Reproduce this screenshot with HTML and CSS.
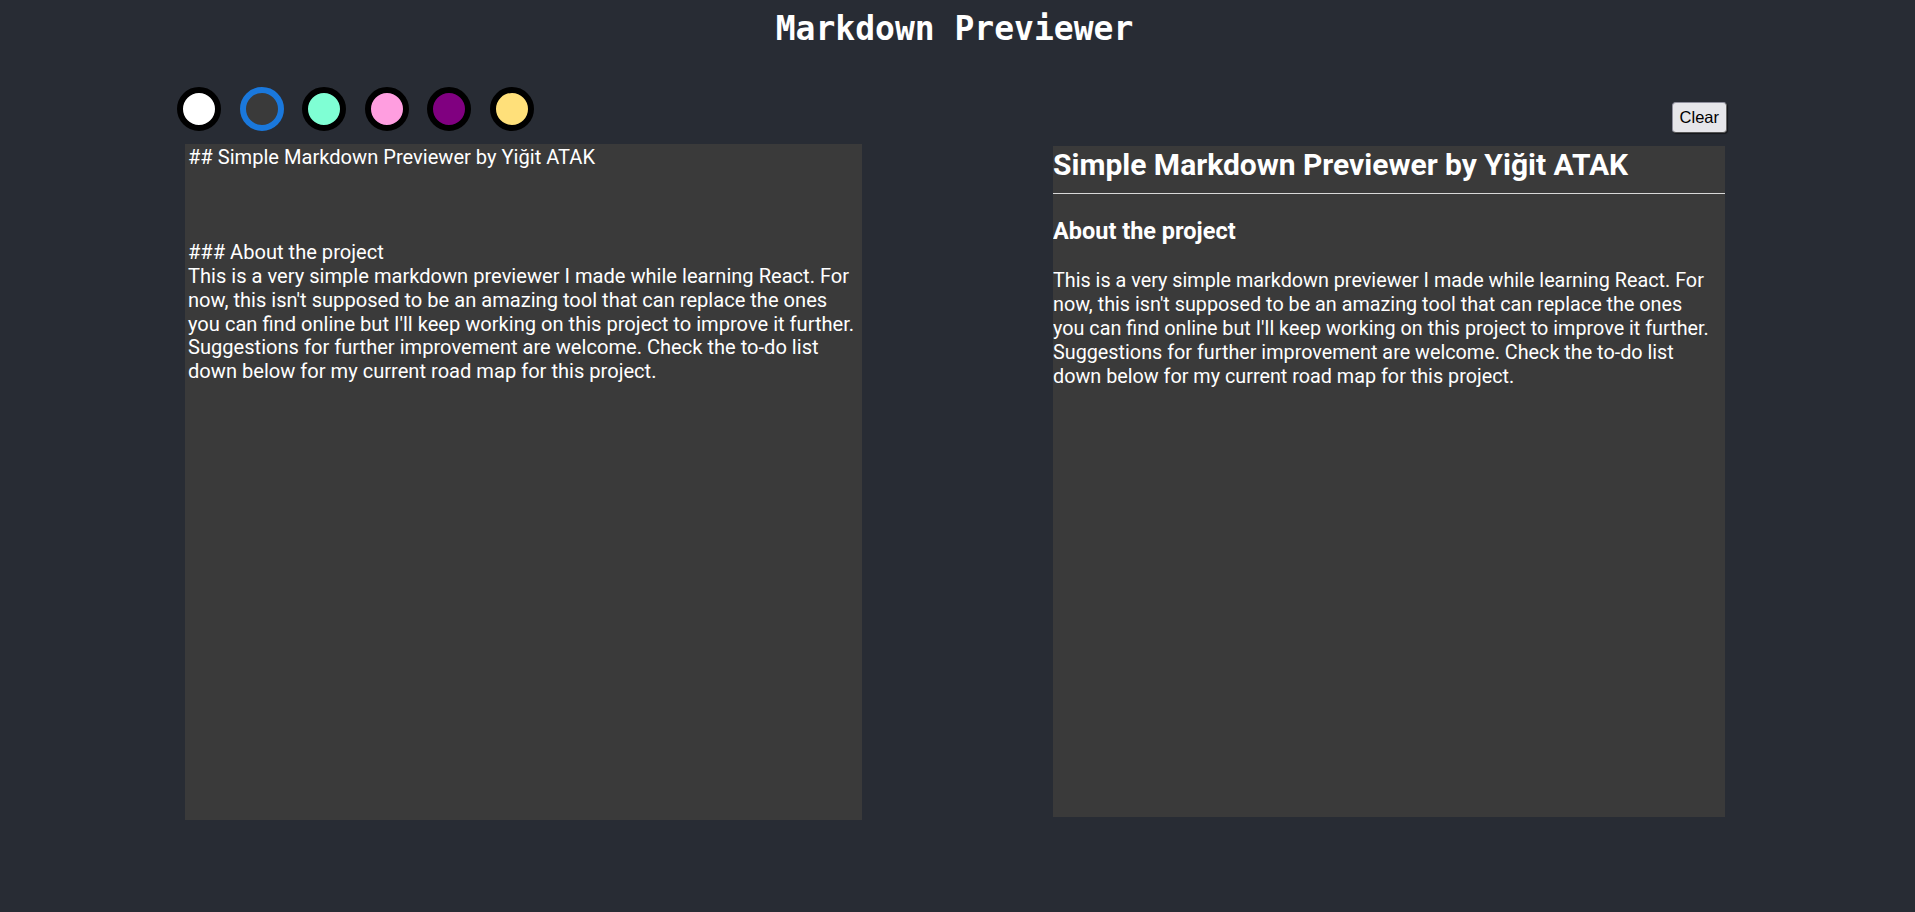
FILE: index.html
```html
<!DOCTYPE html>
<html lang="en">
<head>
<meta charset="utf-8">
<title>Markdown Previewer</title>
<link rel="stylesheet" href="styles.css">
</head>
<body>
<header class="header">
  <h1 class="title">Markdown Previewer</h1>
</header>
<main class="app">
  <div class="toolbar">
    <div class="themes">
      <span class="swatch swatch-white"></span>
      <span class="swatch swatch-dark active"></span>
      <span class="swatch swatch-aqua"></span>
      <span class="swatch swatch-pink"></span>
      <span class="swatch swatch-purple"></span>
      <span class="swatch swatch-yellow"></span>
    </div>
    <button class="clear-btn" type="button">Clear</button>
  </div>
  <div class="panes">
    <textarea class="editor" spellcheck="false">## Simple Markdown Previewer by Yiğit ATAK



### About the project
This is a very simple markdown previewer I made while learning React. For now, this isn't supposed to be an amazing tool that can replace the ones you can find online but I'll keep working on this project to improve it further. Suggestions for further improvement are welcome. Check the to-do list down below for my current road map for this project.</textarea>
    <div class="preview">
      <h2 class="pv-h2">Simple Markdown Previewer by Yiğit ATAK</h2>
      <h3 class="pv-h3">About the project</h3>
      <p class="pv-p">This is a very simple markdown previewer I made while learning React. For now, this isn't supposed to be an amazing tool that can replace the ones you can find online but I'll keep working on this project to improve it further. Suggestions for further improvement are welcome. Check the to-do list down below for my current road map for this project.</p>
    </div>
  </div>
</main>
</body>
</html>
```

FILE: styles.css
```css
html, body {
  margin: 0;
  padding: 0;
  background: #282c34;
  height: 100%;
}

body {
  font-family: Roboto, "Liberation Sans", sans-serif;
  color: #ffffff;
}

.header {
  display: flex;
  justify-content: center;
  padding-top: 8px;
  padding-right: 6px;
}

.title {
  margin: 0;
  font-family: "DejaVu Sans Mono", "Liberation Mono", monospace;
  font-weight: bold;
  font-size: 33px;
  line-height: 42px;
  color: #ffffff;
}

.app {
  width: 1550px;
  margin: 0 0 0 177px;
}

.toolbar {
  display: flex;
  justify-content: space-between;
  align-items: flex-end;
  margin-top: 37px;
}

.themes {
  display: flex;
  gap: 18.5px;
  padding-bottom: 2px;
}

.swatch {
  display: block;
  width: 44px;
  height: 44px;
  box-sizing: border-box;
  border: 6px solid #000000;
  border-radius: 50%;
}

.swatch-white { background: #ffffff; }
.swatch-dark { background: #3a3a3a; }
.swatch-dark.active { border-color: #1a78dc; }
.swatch-aqua { background: #7fffd4; }
.swatch-pink { background: #ff9ee0; }
.swatch-purple { background: #800080; }
.swatch-yellow { background: #ffe07a; }

.clear-btn {
  font-family: "Liberation Sans", Arial, sans-serif;
  font-size: 16.5px;
  color: #000000;
  background: #e6e6ea;
  border: 1px solid #8f8f9d;
  border-bottom-color: #555;
  border-right-color: #666;
  border-radius: 4px;
  padding: 4px 7px;
  height: 31px;
  box-shadow: 1px 1px 1px rgba(0,0,0,0.5);
}

.panes {
  display: flex;
  justify-content: space-between;
  align-items: flex-start;
  padding: 0 2px 0 8px;
  margin-top: 11px;
}

.editor {
  display: block;
  width: 677px;
  height: 676px;
  box-sizing: border-box;
  margin: 0;
  padding: 2px 4px 2px 3px;
  border: none;
  outline: none;
  resize: none;
  overflow: hidden;
  background: #3a3a3a;
  color: #ffffff;
  font-family: Roboto, "Liberation Sans", sans-serif;
  font-size: 20.1px;
  line-height: 23.8px;
}

.preview {
  width: 672px;
  height: 671px;
  box-sizing: border-box;
  padding-right: 9px;
  margin-top: 2px;
  background: #3a3a3a;
  color: #ffffff;
  overflow: hidden;
}

.pv-h2 {
  margin: 0 -9px 0 0;
  font-size: 30px;
  font-weight: bold;
  line-height: 38px;
  padding-bottom: 9px;
  border-bottom: 1px solid #d8d8d8;
  white-space: nowrap;
}

.pv-h3 {
  margin: 24px 0 0;
  font-size: 23.5px;
  font-weight: bold;
  line-height: 27px;
}

.pv-p {
  margin: 24px 0 0;
  font-size: 19.8px;
  line-height: 24px;
}
```
